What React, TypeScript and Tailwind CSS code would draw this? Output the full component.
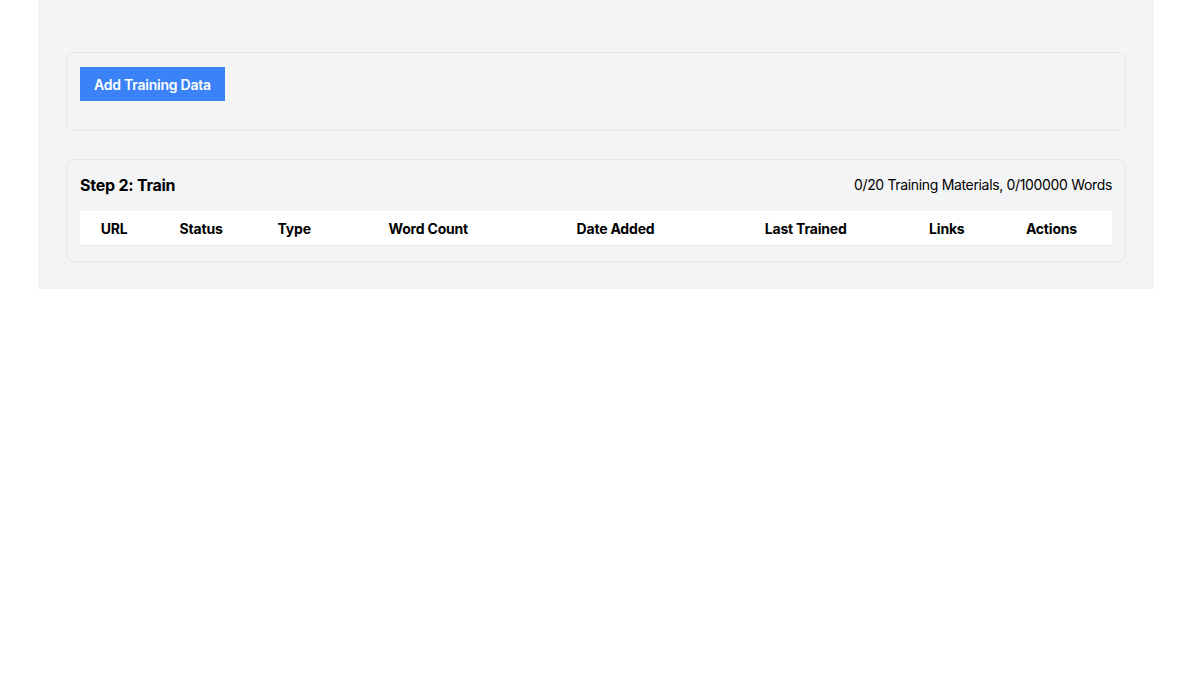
const COLUMNS: { label: string; width: number }[] = [
  { label: "URL", width: 68 },
  { label: "Status", width: 106 },
  { label: "Type", width: 80 },
  { label: "Word Count", width: 188 },
  { label: "Date Added", width: 186 },
  { label: "Last Trained", width: 194 },
  { label: "Links", width: 88 },
  { label: "Actions", width: 121 },
];

export default function App() {
  return (
    <div className="min-h-screen bg-white font-['Inter',sans-serif] text-black">
      <div className="mx-[38px] w-[1116px] bg-gray-100 px-[28px] pt-[52px] pb-[27px]">
        {/* Step 1 card */}
        <div className="rounded-lg border border-gray-200 px-[13px] pt-[14px] pb-[29px]">
          <button className="h-[34px] bg-[#3b82f6] px-[14px] pt-[2px] text-sm font-semibold tracking-[-0.017em] text-white">
            Add Training Data
          </button>
        </div>

        {/* Step 2 card */}
        <div className="mt-[28px] rounded-lg border border-gray-200 px-[13px] pt-[13px] pb-[15px]">
          <div className="flex h-6 items-center justify-between">
            <h2 className="text-base font-bold tracking-[-0.015em]">Step 2: Train</h2>
            <span className="text-sm tracking-[-0.024em]">0/20 Training Materials, 0/100000 Words</span>
          </div>
          <table className="mt-[14px] w-full table-fixed border-collapse">
            <thead>
              <tr className="h-[34px] border-b border-gray-200 bg-white">
                {COLUMNS.map((c) => (
                  <th
                    key={c.label}
                    style={{ width: c.width }}
                    className="pt-[2px] text-center text-sm font-bold tracking-[-0.014em]"
                  >
                    {c.label}
                  </th>
                ))}
              </tr>
            </thead>
          </table>
        </div>
      </div>
    </div>
  );
}
